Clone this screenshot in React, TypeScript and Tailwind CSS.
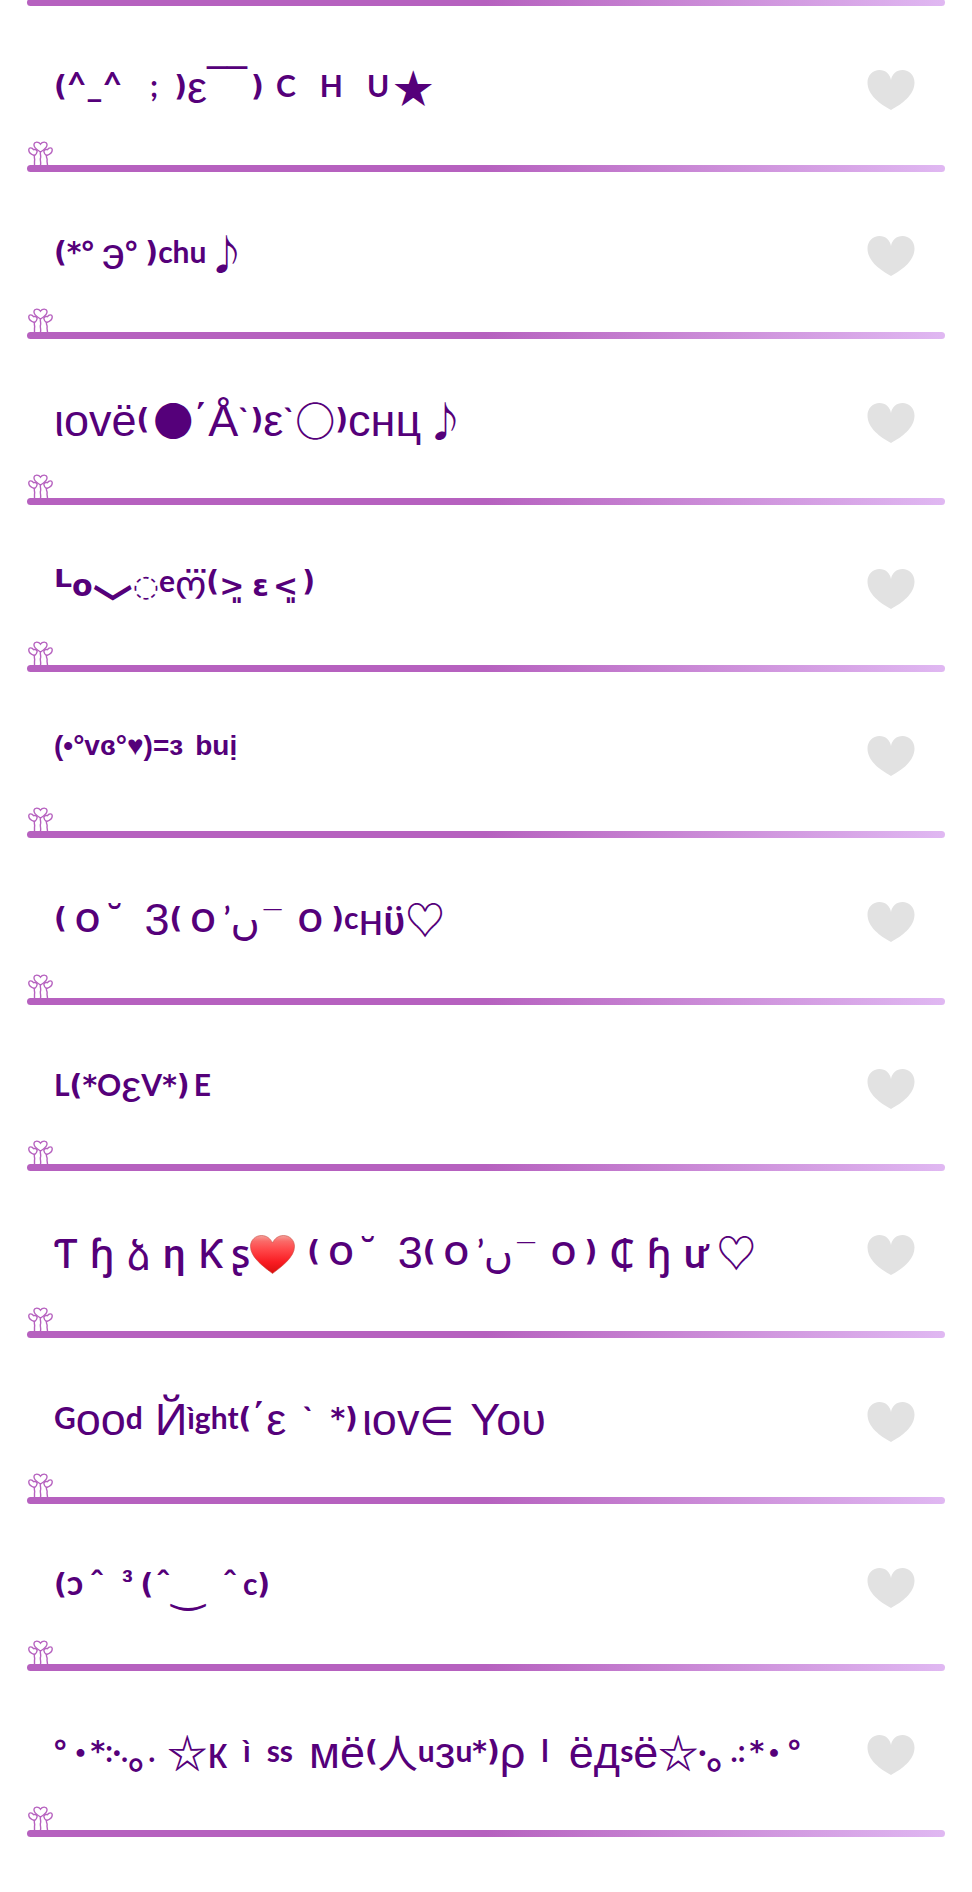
import clsx from 'clsx'

type Tone = keyof typeof tones
type Piece = [text: string, tone: Tone, gap?: string]

const tones = {
  hand: 'font-[Lato] text-[30px] font-bold align-[6px]',
  caret: 'font-[Lato] text-[34px] font-bold align-[6px]',
  paren: 'font-[DejaVu_Sans] text-[28px] font-bold align-[7px]',
  sans: 'font-[Liberation_Sans] text-[45px]',
  ring: 'font-[Lato] text-[45px] font-medium align-[3px]',
  sup: 'font-[Liberation_Sans] text-[32px] font-bold align-[8px]',
  macron: 'font-[Liberation_Sans] text-[32px] font-bold align-[2px]',
  over: 'font-[DejaVu_Sans] text-[40px] align-[6px]',
  round: 'font-[Roboto,Noto_Sans,sans-serif] text-[40px] font-medium',
  bold: 'font-[DejaVu_Sans] text-[30px] font-bold align-[2px]',
  raised: 'font-[DejaVu_Sans] text-[45px] font-bold align-[-4px]',
  georgian: 'font-[DejaVu_Sans] text-[40px] align-[-1px]',
  armenian: 'font-[DejaVu_Sans] text-[40px] align-[-2px]',
  tiny: 'font-[Liberation_Sans] text-[28px] font-bold align-[14px]',
  symbol: 'font-[DejaVu_Sans] text-[40px]',
  cjk: 'font-[Noto_Sans_CJK_JP] text-[40px] font-bold',
  kanji: 'font-[Noto_Sans_CJK_JP] text-[40px]',
  low: 'font-[Noto_Sans_CJK_JP] text-[40px] font-bold align-[-20px]',
  emoji: '',
}

const pout: Piece[] = [
  ['(', 'paren'],
  ['o', 'ring', 'ml-2'],
  ['˘', 'symbol', 'ml-1'],
  ['3', 'sans', 'ml-5'],
  ['(', 'paren'],
  ['o', 'ring', 'ml-2'],
  ['’', 'hand', 'ml-2'],
  ['ں', 'symbol'],
  ['¯', 'macron', 'ml-1'],
  ['o', 'ring', 'ml-4'],
  [')', 'paren', 'ml-2'],
]

const rows: Piece[][] = [
  [['(', 'paren'], ['^_^', 'caret'], [';', 'hand', 'ml-7'], [')', 'paren', 'ml-4'], ['ε', 'sans'], ['‾‾', 'over'], [')', 'paren', 'ml-1'], ['C', 'hand', 'ml-3'], ['H', 'hand', 'ml-6'], ['U', 'hand', 'ml-6'], ['★', 'cjk', 'ml-1']],
  [['(*', 'paren'], ['°', 'hand'], ['э', 'sans', 'ml-2'], ['°', 'hand'], [')', 'paren', 'ml-2'], ['chu', 'hand'], ['♪', 'cjk']],
  [['ιovё', 'sans'], ['(', 'paren'], ['●', 'cjk', 'ml-1'], ['΄Å', 'sans'], ['`', 'hand'], [')', 'paren'], ['ε', 'sans'], ['`', 'hand'], ['○', 'cjk'], [')', 'paren'], ['cнц', 'sans'], ['♪', 'cjk', 'ml-1']],
  [['ᴸ', 'raised'], ['o', 'bold'], ['﹀', 'low'], ['◌', 'bold'], ['e', 'hand'], ['ო⃛', 'georgian'], ['(', 'paren'], ['>͈', 'bold'], ['ε', 'bold', 'ml-2'], ['<͈', 'bold', 'ml-1'], [')', 'paren', 'ml-1']],
  [['(•°vɞ°♥)', 'tiny'], ['=', 'tiny'], ['з', 'tiny'], ['buị', 'tiny', 'ml-3']],
  [...pout, ['c', 'hand'], ['н', 'sans'], ['ϋ', 'round'], ['♡', 'cjk']],
  [['L', 'hand'], ['(*', 'paren'], ['O', 'hand'], ['ε', 'sans'], ['V', 'hand'], ['*)', 'paren'], ['E', 'hand', 'ml-1']],
  [['Ƭ', 'round'], ['ɧ', 'round', 'ml-3'], ['ձ', 'armenian', 'ml-3'], ['η', 'round', 'ml-3'], ['Ƙ', 'round', 'ml-3'], ['ʂ', 'round', 'ml-2'], ['❤️', 'emoji'], ['', 'hand', 'ml-3'], ...pout, ['₵', 'round', 'ml-3'], ['ɧ', 'round', 'ml-3'], ['ư', 'round', 'ml-3'], ['♡', 'cjk', 'ml-2']],
  [['G', 'hand'], ['оо', 'sans'], ['d', 'hand'], ['Й', 'sans', 'ml-3'], ['ìght', 'hand'], ['(', 'paren'], ['΄ε', 'sans'], ['`', 'hand', 'ml-4'], ['*)', 'paren', 'ml-4'], ['ιov', 'sans', 'ml-1'], ['∈', 'symbol'], ['Υου', 'sans', 'ml-4']],
  [['(', 'paren'], ['ɔ', 'caret'], ['ˆ', 'sup', 'ml-2'], ['³', 'sup', 'ml-5'], ['(', 'paren', 'ml-2'], ['ˆ', 'sup', 'ml-1'], ['‿', 'symbol', 'ml-1'], ['ˆ', 'sup', 'ml-5'], ['c', 'hand', 'ml-2'], [')', 'paren']],
  [['°', 'hand'], ['･', 'cjk', 'ml-1'], ['*', 'paren'], [':·.', 'hand'], ['｡', 'cjk'], ['.', 'hand'], ['☆', 'cjk', 'ml-3'], ['к', 'sans'], ['ì', 'hand', 'ml-4'], ['ss', 'hand', 'ml-4'], ['мё', 'sans', 'ml-4'], ['(', 'paren'], ['人', 'kanji'], ['u', 'hand'], ['з', 'sans'], ['u', 'hand'], ['*)', 'paren'], ['ρ', 'sans'], ['l', 'hand', 'ml-4'], ['ёд', 'sans', 'ml-5'], ['s', 'hand'], ['ё', 'sans'], ['☆', 'cjk'], ['·', 'hand'], ['｡', 'cjk'], ['.:', 'hand', 'ml-1'], ['*', 'paren', 'ml-1'], ['･', 'cjk'], ['°', 'hand', 'ml-1']],
]

function Bar () {
  return <div className="h-[7px] rounded-full bg-linear-to-r from-[#b661bf] from-50% to-[#e0b8f2]" />
}

function Flowers () {
  return (
    <svg className="ml-px h-6 w-[25px]" viewBox="0 0 25 24" fill="none" stroke="#b661bf" strokeWidth="1.4" strokeLinecap="round" aria-hidden="true">
      <path d="M12.500 11 C9 9 5.500 6 6 3.200 C6.500 .600 10.500 .300 12.500 3.200 C14.500 .300 18.500 .600 19 3.200 C19.500 6 16 9 12.500 11Z" />
      <path d="M6.500 14.500 C3 13.500 .500 11.500 .800 8.500 C1 6.500 4 6 5.500 8.700 C7.500 8 9.500 9 9 11 C8.700 13 7.500 14 6.500 14.500Z" />
      <path d="M18.500 14.500 C22 13.500 24.500 11.500 24.200 8.500 C24 6.500 21 6 19.500 8.700 C17.500 8 15.500 9 16 11 C16.300 13 17.500 14 18.500 14.500Z" />
      <path d="M12.500 11 C11.800 13 13.200 14 12.500 17 C11.800 19 13.200 21 12.500 24 M6.500 14.500 C5.800 17 7.200 18 6.500 20 L6.500 24 M18.500 14.500 C18 17 19.700 17 19 20 L19.500 24" />
    </svg>
  )
}

function RedHeart () {
  return (
    <svg className="inline-block h-[39px] w-[45px] align-[-6px]" viewBox="0 0 45 39" role="img" aria-label="red heart">
      <defs>
        <linearGradient id="red" x1="0" y1="0" x2="0" y2="1">
          <stop offset="0" stopColor="#f5a09a" />
          <stop offset=".15" stopColor="#fa6a68" />
          <stop offset=".35" stopColor="#ff4a4c" />
          <stop offset=".7" stopColor="#f91c22" />
          <stop offset="1" stopColor="#d90f0f" />
        </linearGradient>
      </defs>
      <path fill="url(#red)" stroke="#c94a40" strokeWidth=".6" d="M22.500 38.500 C14 32 .500 22.500 .500 11.500 C.500 5 5.500 .500 11.500 .500 C16.500 .500 20.500 3.500 22.500 8 C24.500 3.500 28.500 .500 33.500 .500 C39.500 .500 44.500 5 44.500 11.500 C44.500 22.500 31 32 22.500 38.500Z" />
    </svg>
  )
}

function LikeButton () {
  return (
    <button type="button" aria-label="Like" className="shrink-0 text-[#e2e2e2]">
      <svg className="h-10 w-12" viewBox="0 0 48 40" fill="currentColor" aria-hidden="true">
        <path d="M24 40 C13 34 .500 25 .500 12.500 C.500 5 6 0 12.500 0 C18.500 0 23 4 24 10 C25 4 29.500 0 35.500 0 C42 0 47.500 5 47.500 12.500 C47.500 25 35 34 24 40Z" />
      </svg>
    </button>
  )
}

function Row ({ pieces }: { pieces: Piece[] }) {
  return (
    <li className="flex flex-col odd:h-[166px] even:h-[167px]">
      <div className="mt-12 flex h-[72px] items-center justify-between pr-[30px] pl-[27px]">
        <p className="pb-1 leading-[60px] whitespace-nowrap text-[#55007a] font-[Liberation_Sans] text-[45px]">
          {pieces.map(([text, tone, gap], i) => (
            tone === 'emoji'
              ? <RedHeart key={i} />
              : <span key={i} className={clsx('leading-none', tones[tone], gap)}>{text}</span>
          ))}
        </p>
        <LikeButton />
      </div>
      <div className="mt-auto">
        <Flowers />
        <Bar />
      </div>
    </li>
  )
}

export default function App () {
  return (
    <main className="min-h-screen overflow-hidden bg-white px-[27px] pb-[55px]">
      <div className="-mt-px">
        <Bar />
      </div>
      <ul>
        {rows.map((pieces, i) => <Row key={i} pieces={pieces} />)}
      </ul>
    </main>
  )
}
